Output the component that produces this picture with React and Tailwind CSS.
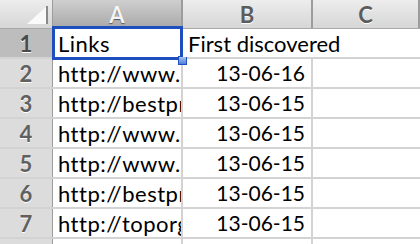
const rows = [
  ['Links', 'First discovered'],
  ['http://www.', '13-06-16'],
  ['http://bestpr', '13-06-15'],
  ['http://www.', '13-06-15'],
  ['http://www.', '13-06-15'],
  ['http://bestpr', '13-06-15'],
  ['http://toporg', '13-06-15'],
  ['', ''],
];

const cols = ['A', 'B', 'C'];
const font = { fontFamily: 'Lato, "Open Sans", sans-serif' };

export default function App() {
  return (
    <div className="w-[420px] h-[244px] overflow-hidden bg-white" style={font}>
      {/* column headers */}
      <div className="flex h-[29px] border-b border-[#a8a8a8]">
        <div className="relative w-[53px] shrink-0 border-r border-[#9c9c9c] bg-gradient-to-b from-[#ededed] to-[#d6d6d6]">
          <div className="absolute right-[5px] bottom-[4px] w-0 h-0 border-l-[20px] border-l-transparent border-b-[18px] border-b-[#fafafa]" />
          <div className="absolute right-[4px] bottom-[4px] w-[2px] h-[18px] bg-[#8a8a8a]" />
        </div>
        {cols.map((c) => (
          <div
            key={c}
            className={
              'flex items-center justify-center shrink-0 border-r-2 border-[#9c9c9c] text-[22px] font-bold ' +
              (c === 'A'
                ? 'w-[130px] bg-gradient-to-b from-[#cfcfcf] to-[#a9a9a9] text-[#f4f4f4] [text-shadow:0_1px_1px_#555]'
                : c === 'B'
                ? 'w-[130px] bg-gradient-to-b from-[#ededed] to-[#d6d6d6] text-[#5c5c5c] [text-shadow:0_1px_0_#fff]'
                : 'flex-1 bg-gradient-to-b from-[#ededed] to-[#d6d6d6] text-[#5c5c5c] [text-shadow:0_1px_0_#fff]')
            }
          >
            {c}
          </div>
        ))}
      </div>

      {rows.map((r, i) => (
        <div key={i} className="flex h-[30px] border-b-2 border-[#d3d3d3]">
          <div
            className={
              'w-[53px] shrink-0 flex items-center justify-center border-r border-[#9c9c9c] text-[22px] font-bold [text-shadow:0_1px_0_#fff] ' +
              (i === 0 ? 'bg-[#bdbdbd] text-[#4a4a4a]' : 'bg-[#dcdcdc] text-[#606060]')
            }
          >
            {i < 7 ? i + 1 : ''}
          </div>
          <div className="relative w-[130px] shrink-0 border-r-2 border-[#d3d3d3]">
            <div className="absolute inset-0 overflow-hidden whitespace-nowrap pl-[5px] flex items-center text-[22px] tracking-[0.5px] text-black">
              {r[0]}
            </div>
            {i === 0 && (
              <>
                <div className="absolute -left-px -top-[3px] right-[-2px] bottom-[-3px] border-[3px] border-[#1f4fbf] pointer-events-none" />
                <div className="absolute right-[-6px] bottom-[-8px] w-[9px] h-[9px] border border-[#1f4fbf] bg-gradient-to-b from-[#a9c4f0] to-[#4f80d8] z-10" />
              </>
            )}
          </div>
          <div className="relative w-[130px] shrink-0 border-r-2 border-[#d3d3d3]">
            {i === 0 ? (
              <div className="absolute left-0 inset-y-0 pl-[5px] flex items-center whitespace-nowrap text-[22px] text-black z-10 bg-white pr-1">
                {r[1]}
              </div>
            ) : (
              <div className="absolute inset-0 flex items-center justify-end pr-[6px] text-[21px] text-black">
                {r[1]}
              </div>
            )}
          </div>
          <div className="flex-1" />
        </div>
      ))}
    </div>
  );
}
